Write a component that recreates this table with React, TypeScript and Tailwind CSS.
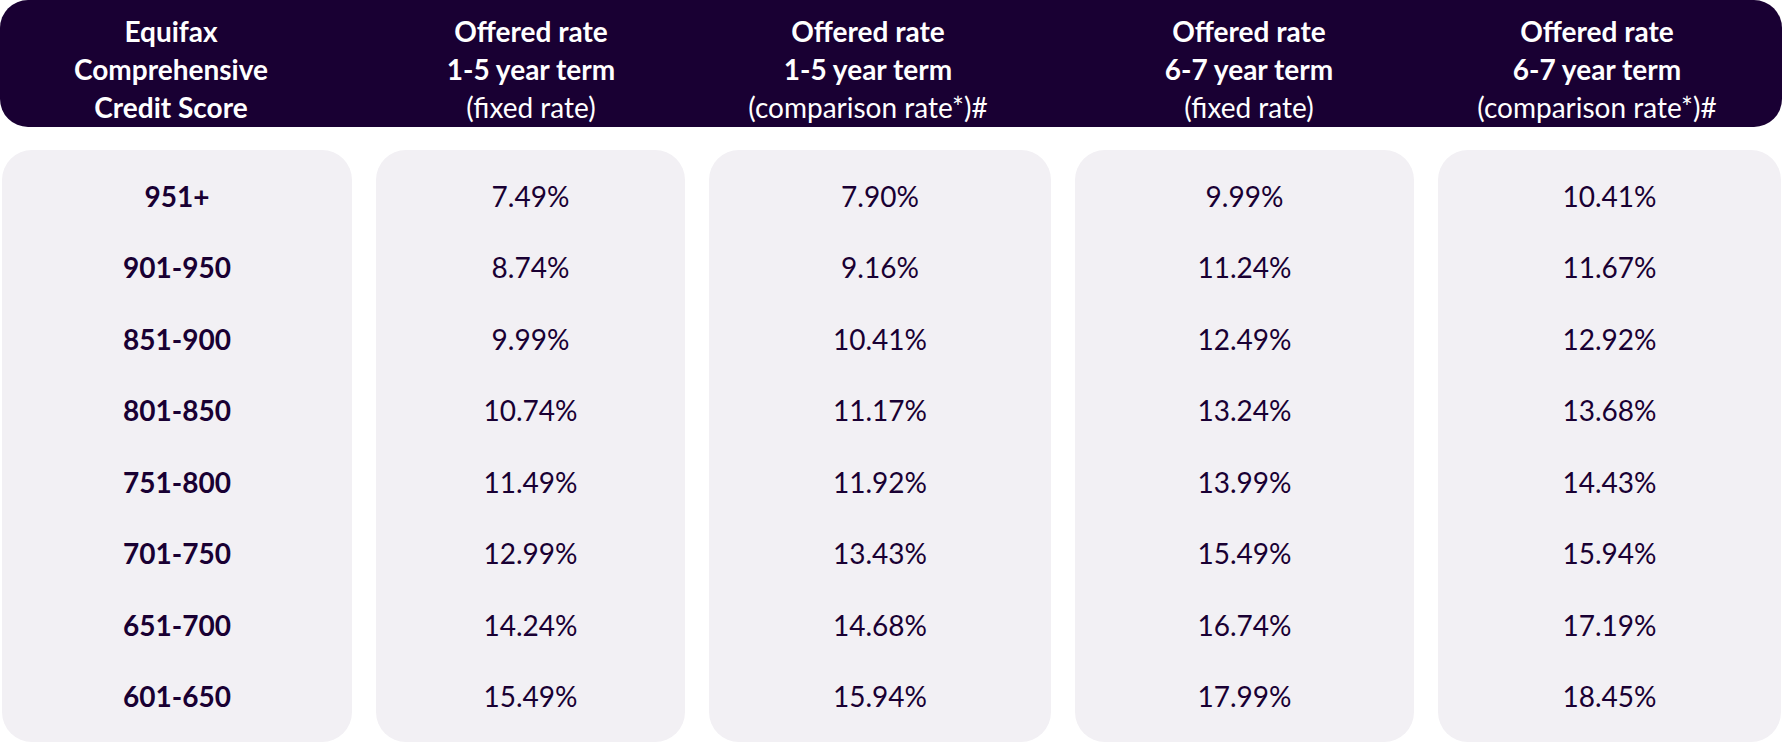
const headers: { top: string[]; sub: string }[] = [
  { top: ['Offered rate', '1-5 year term'], sub: '(fixed rate)' },
  { top: ['Offered rate', '1-5 year term'], sub: '(comparison rate*)#' },
  { top: ['Offered rate', '6-7 year term'], sub: '(fixed rate)' },
  { top: ['Offered rate', '6-7 year term'], sub: '(comparison rate*)#' },
];

const scores = ['951+', '901-950', '851-900', '801-850', '751-800', '701-750', '651-700', '601-650'];

const rates: string[][] = [
  ['7.49%', '8.74%', '9.99%', '10.74%', '11.49%', '12.99%', '14.24%', '15.49%'],
  ['7.90%', '9.16%', '10.41%', '11.17%', '11.92%', '13.43%', '14.68%', '15.94%'],
  ['9.99%', '11.24%', '12.49%', '13.24%', '13.99%', '15.49%', '16.74%', '17.99%'],
  ['10.41%', '11.67%', '12.92%', '13.68%', '14.43%', '15.94%', '17.19%', '18.45%'],
];

const cols = 'grid grid-cols-[350px_309px_342px_339px_343px] gap-x-[24px]';

function Column({ items, bold }: { items: string[]; bold?: boolean }) {
  return (
    <div className="flex flex-col rounded-[30px] bg-[#f2f0f4] py-[10px]">
      {items.map((item) => (
        <div
          key={item}
          className={`flex h-[71.5px] items-center justify-center text-[28px] text-[#190033] ${
            bold ? 'font-bold' : 'font-normal'
          }`}
        >
          {item}
        </div>
      ))}
    </div>
  );
}

export default function App() {
  return (
    <div className="min-h-screen bg-white font-['Lato',sans-serif]">
      {/* header columns don't line up exactly with the cards below */}
      <div className="grid h-[127px] w-[1782px] grid-cols-[342px_378px_296px_466px_230px] rounded-[28px] bg-[#190033] pt-[10px] text-[28px] leading-[38px] text-white">
        <div className="flex flex-col items-center justify-center whitespace-nowrap font-bold">
          <span>Equifax</span>
          <span>Comprehensive</span>
          <span>Credit Score</span>
        </div>
        {headers.map((h, i) => (
          <div key={i} className="flex flex-col items-center justify-center whitespace-nowrap">
            {h.top.map((t) => (
              <span key={t} className="font-bold">
                {t}
              </span>
            ))}
            <span>{h.sub}</span>
          </div>
        ))}
      </div>

      <div className={`${cols} mt-[23px] pl-[2px]`}>
        <Column items={scores} bold />
        {rates.map((col, i) => (
          <Column key={i} items={col} />
        ))}
      </div>
    </div>
  );
}
